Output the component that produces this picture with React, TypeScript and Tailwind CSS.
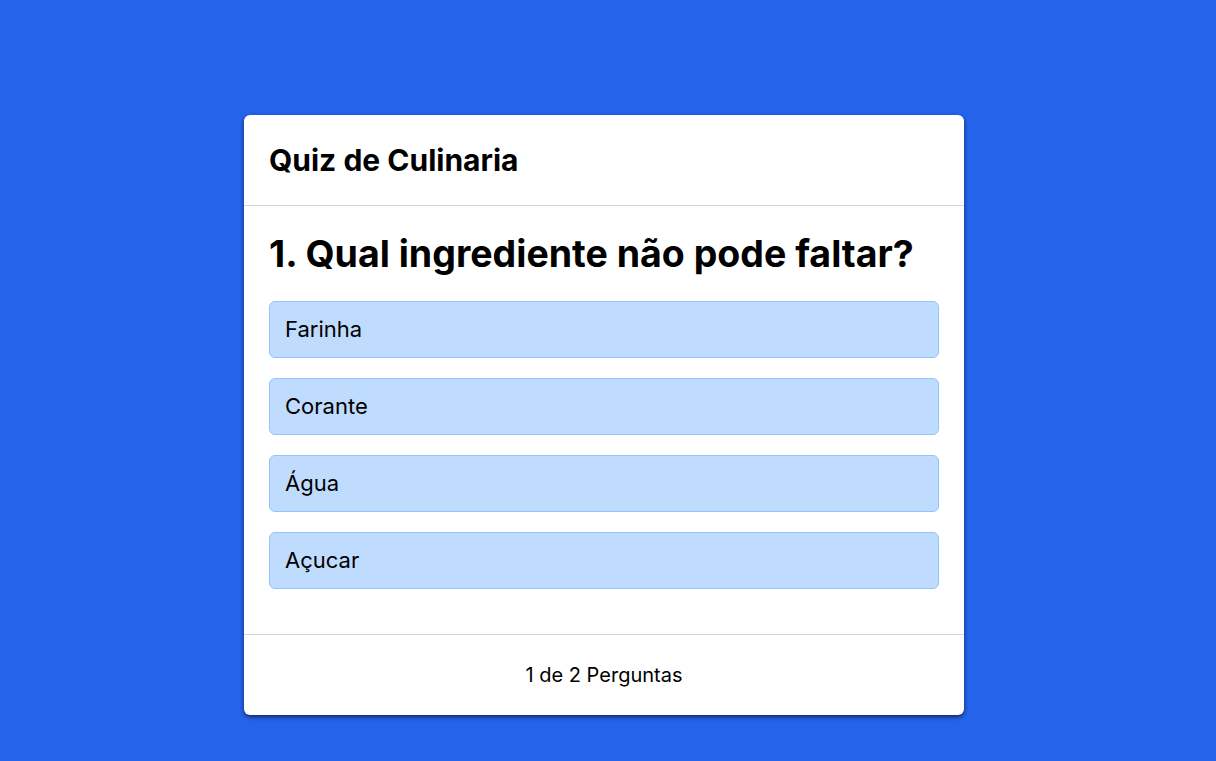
const options = ['Farinha', 'Corante', 'Água', 'Açucar'];

export default function App() {
  return (
    <div
      className="flex min-h-screen justify-center bg-[#2563eb] pt-[115px] pr-[8px] pb-[46px]"
      style={{ fontFamily: 'Inter, "Noto Sans", sans-serif' }}
    >
      <div className="h-fit w-[720px] rounded-md bg-white shadow-[0_2px_4px_rgba(0,0,0,0.6)]">
        <div className="flex h-[91px] items-center border-b border-[#d4d4d8] px-[25px]">
          <h1 className="text-[30px] font-bold text-black">Quiz de Culinaria</h1>
        </div>

        <div className="px-[25px] pt-[26px] pb-[45px]">
          <h2 className="text-[37.5px] leading-[44px] font-bold text-black">
            1. Qual ingrediente não pode faltar?
          </h2>
          <div className="mt-[25px] flex flex-col gap-[20px]">
            {options.map((o) => (
              <button
                key={o}
                className="flex h-[57px] items-center rounded-md border border-[#93c5fd] bg-[#bfdbfe] px-[15px] text-left text-[22px] text-black"
              >
                {o}
              </button>
            ))}
          </div>
        </div>

        <div className="flex h-[81px] items-center justify-center border-t border-[#d4d4d8]">
          <p className="text-[20px] text-black">1 de 2 Perguntas</p>
        </div>
      </div>
    </div>
  );
}
